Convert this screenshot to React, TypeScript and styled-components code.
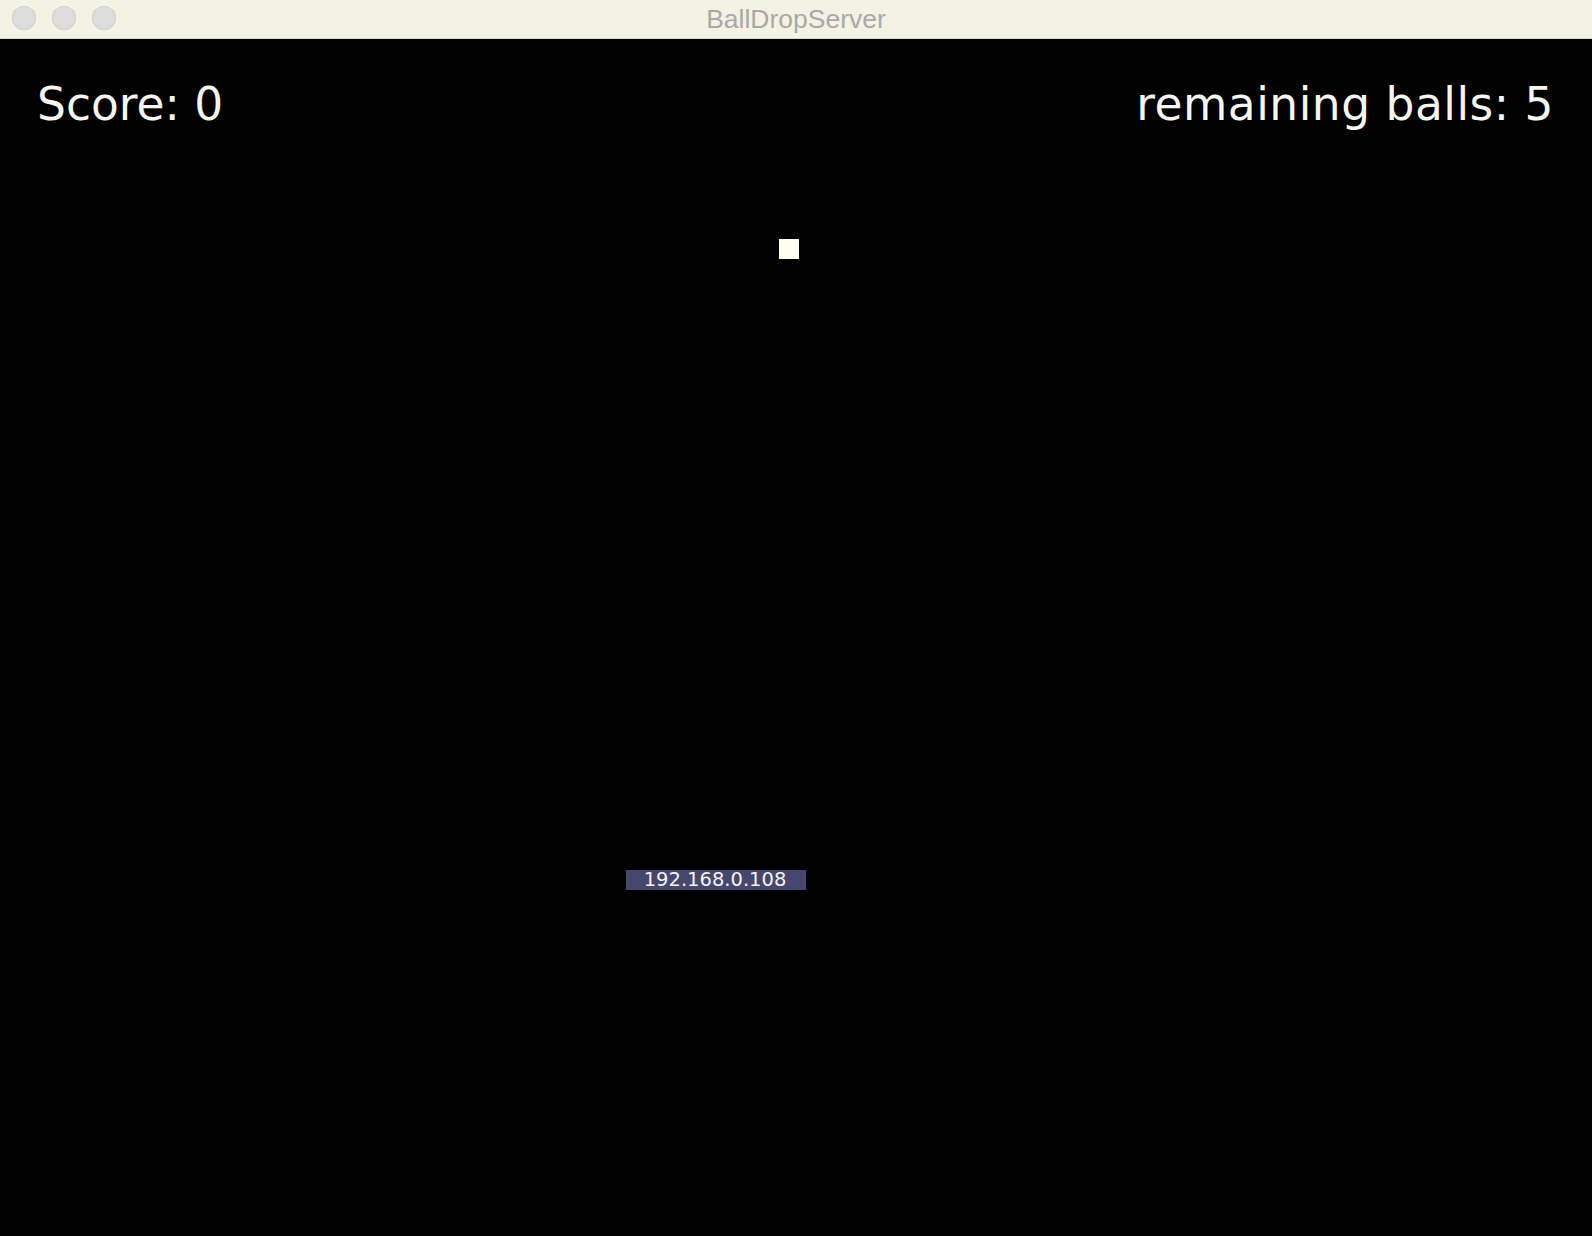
import React from "react";
import styled, { createGlobalStyle } from "styled-components";

const Global = createGlobalStyle`
  html, body { margin: 0; padding: 0; background: #000; }
  body { width: 1592px; height: 1236px; overflow: hidden; }
`;

const Window = styled.div`
  width: 1592px;
  height: 1236px;
  display: flex;
  flex-direction: column;
  background: #000;
`;

const TitleBar = styled.div`
  position: relative;
  height: 39px;
  flex: 0 0 39px;
  display: flex;
  align-items: center;
  justify-content: center;
  background: #f4f2e2;
  border-bottom: 1px solid #dedcce;
  box-sizing: border-box;
`;

const Lights = styled.div`
  position: absolute;
  left: 12px;
  top: 6px;
  display: flex;
  gap: 16px;
`;

const Light = styled.span`
  width: 24px;
  height: 24px;
  border-radius: 50%;
  background: #dddcdc;
  box-shadow: inset 0 0 0 1px #d2d1d0;
`;

const Title = styled.div`
  font-family: "Liberation Sans", Arial, sans-serif;
  font-size: 26.5px;
  color: #a9a9ab;
  padding-top: 1px;
`;

const Game = styled.div`
  position: relative;
  flex: 1;
  background: #000;
`;

const Hud = styled.div`
  display: flex;
  justify-content: space-between;
  padding: 43px 38px 0 37px;
`;

const HudText = styled.div`
  font-family: "DejaVu Sans", "Liberation Sans", sans-serif;
  font-size: 45.5px;
  line-height: 45px;
  color: #f6f6f0;
  letter-spacing: ${(p: { $spacing: number }) => p.$spacing}px;
`;

const Ball = styled.div`
  position: absolute;
  left: 779px;
  top: 200px;
  width: 20px;
  height: 20px;
  background: #fffff2;
`;

const Paddle = styled.div`
  position: absolute;
  left: 626px;
  top: 831px;
  width: 180px;
  height: 20px;
  background: #46466e;
  display: flex;
  align-items: center;
  justify-content: center;
  font-family: "DejaVu Sans", "Liberation Sans", sans-serif;
  font-size: 19.5px;
  line-height: 20px;
  color: #f2f2f2;
  padding-right: 2px;
  box-sizing: border-box;
`;

export default function App() {
  return (
    <Window>
      <Global />
      <TitleBar>
        <Lights>
          <Light />
          <Light />
          <Light />
        </Lights>
        <Title>BallDropServer</Title>
      </TitleBar>
      <Game>
        <Hud>
          <HudText $spacing={0}>Score: 0</HudText>
          <HudText $spacing={0.5}>remaining balls: 5</HudText>
        </Hud>
        <Ball />
        <Paddle>192.168.0.108</Paddle>
      </Game>
    </Window>
  );
}
